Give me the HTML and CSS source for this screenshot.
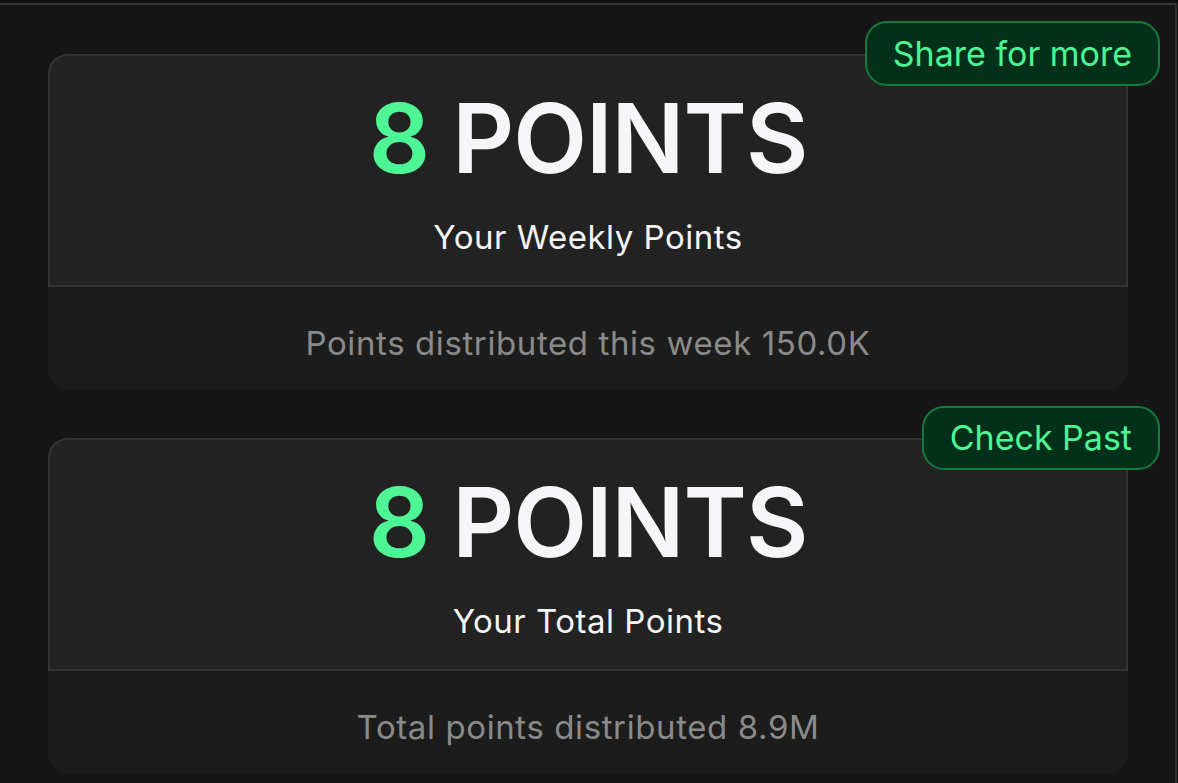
FILE: index.html
```html
<!DOCTYPE html>
<html lang="en">
<head>
<meta charset="utf-8">
<title>Points</title>
<link rel="stylesheet" href="styles.css">
</head>
<body>
<div class="frame">
  <div class="cards">
    <section class="card">
      <div class="card-top">
        <div class="big"><span class="num">8</span> POINTS</div>
        <div class="sub">Your Weekly Points</div>
      </div>
      <div class="card-bottom">Points distributed this week 150.0K</div>
      <button class="pill pill-share">Share for more</button>
    </section>
    <section class="card">
      <div class="card-top">
        <div class="big"><span class="num">8</span> POINTS</div>
        <div class="sub">Your Total Points</div>
      </div>
      <div class="card-bottom">Total points distributed 8.9M</div>
      <button class="pill pill-past">Check Past</button>
    </section>
  </div>
</div>
</body>
</html>
```
FILE: styles.css
```css
* { box-sizing: border-box; }
html, body {
  margin: 0;
  padding: 0;
  background: #0e0e0e;
  height: 100%;
  overflow: hidden;
}
body {
  font-family: "Inter", "Liberation Sans", sans-serif;
}
.frame {
  margin-top: 3px;
  width: 1177px;
  height: 780px;
  background: #161616;
  border-top: 2px solid #353535;
  border-right: 2px solid #303030;
  padding: 49px 0 0 48px;
}
.cards {
  width: 1080px;
  display: flex;
  flex-direction: column;
  gap: 49px;
}
.card {
  position: relative;
  border-radius: 20px;
  background: #1c1c1c;
}
.card-top {
  background: #222222;
  border: 2px solid #333333;
  border-radius: 20px 20px 0 0;
  padding: 34px 0 31px;
  text-align: center;
}
.big {
  font-size: 96px;
  line-height: 96px;
  font-weight: 600;
  color: #f6f6f8;
  letter-spacing: -1px;
}
.num { color: #4ef595; }
.sub {
  margin-top: 35px;
  font-size: 33px;
  line-height: 33px;
  letter-spacing: 0.5px;
  color: #f4f4f4;
  font-weight: 400;
}
.card-bottom {
  height: 102px;
  padding-top: 40px;
  text-align: center;
  font-size: 33px;
  line-height: 33px;
  letter-spacing: 0.6px;
  color: #8a8a8a;
  border-radius: 0 0 20px 20px;
}
.pill {
  position: absolute;
  top: -33px;
  right: -32px;
  height: 65px;
  padding: 0 26px;
  background: #03301a;
  border: 2px solid #167a3c;
  border-radius: 22px;
  color: #4ef595;
  font-family: "Inter", "Liberation Sans", sans-serif;
  font-size: 34px;
  font-weight: 400;
  line-height: 1;
}
.pill-past { top: -32px; height: 64px; }
```
